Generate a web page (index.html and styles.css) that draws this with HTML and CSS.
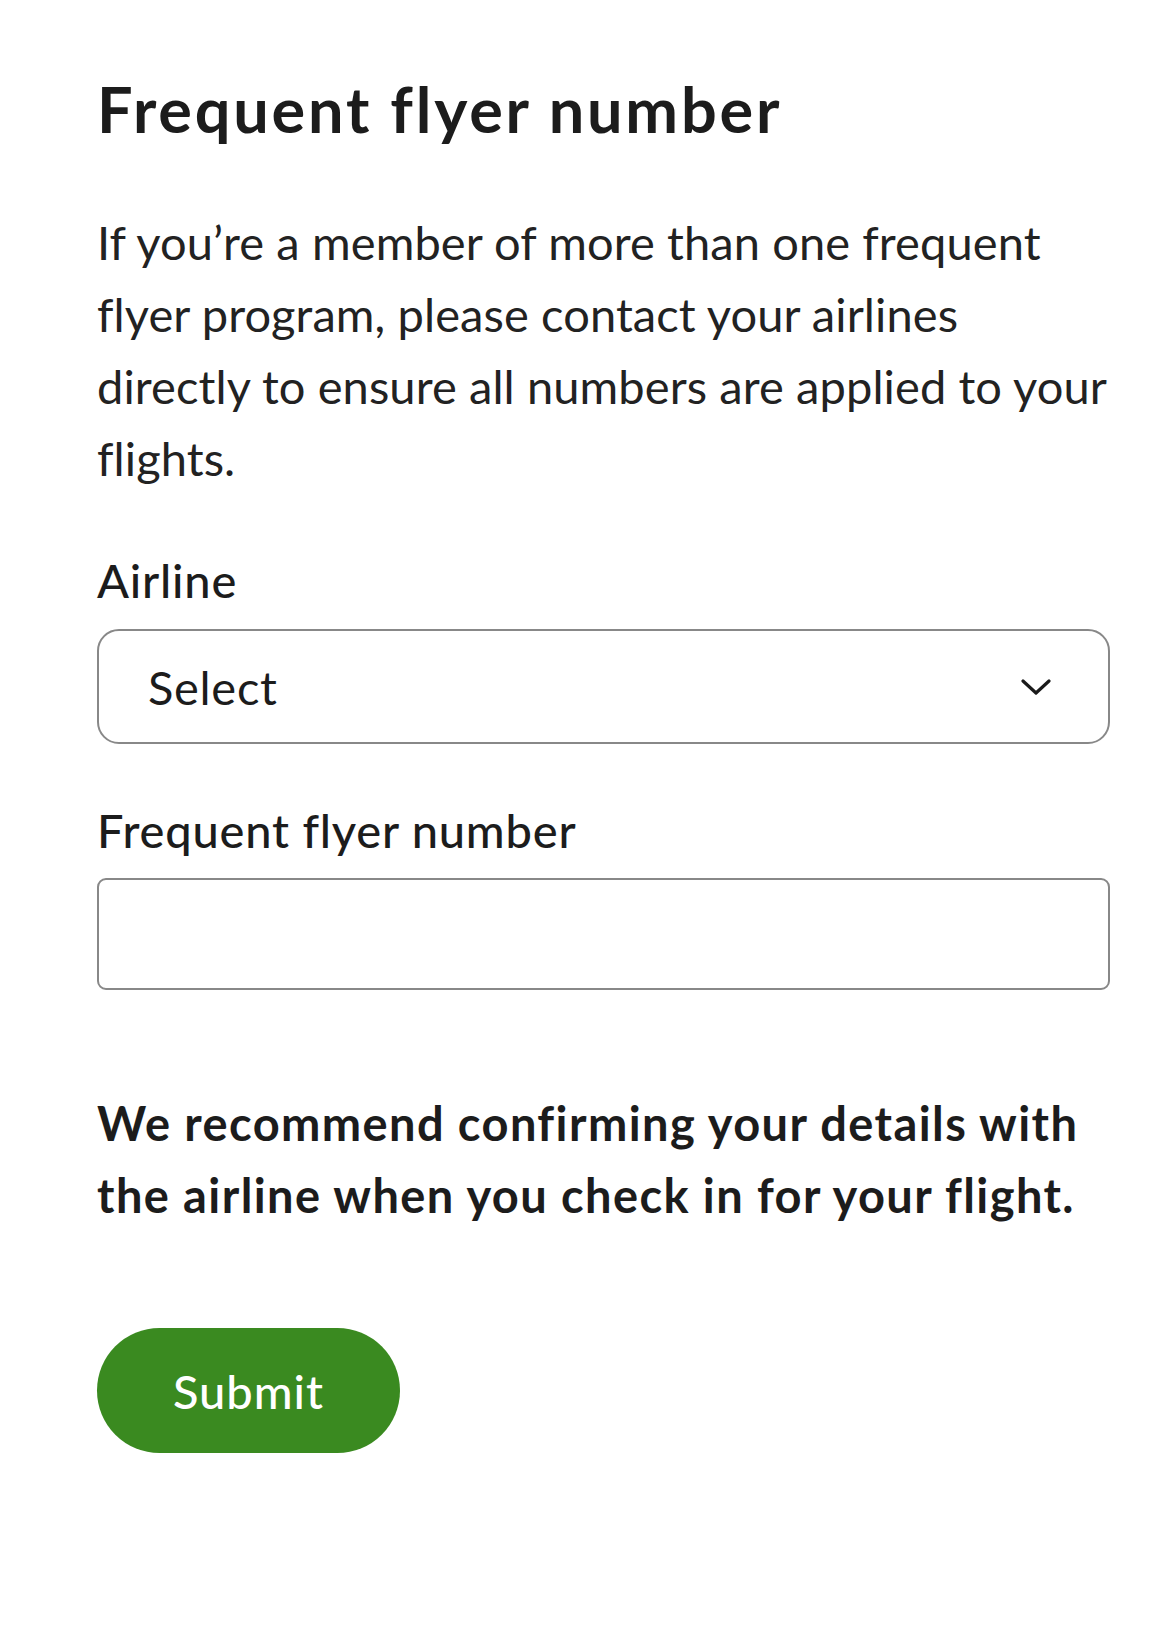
FILE: index.html
```html
<!DOCTYPE html>
<html lang="en">
<head>
<meta charset="utf-8">
<title>Frequent flyer number</title>
<link rel="stylesheet" href="styles.css">
</head>
<body>
<main class="sheet">
  <h1 class="title">Frequent flyer number</h1>
  <p class="intro">If you’re a member of more than one frequent<br>flyer program, please contact your airlines<br>directly to ensure all numbers are applied to your<br>flights.</p>
  <form class="form">
    <label class="label" for="airline">Airline</label>
    <div class="select" id="airline">
      <span class="select-value">Select</span>
      <svg class="chevron" width="30" height="18" viewBox="0 0 30 18" aria-hidden="true">
        <path d="M2 3 L15 15 L28 3" fill="none" stroke="#1a1a1a" stroke-width="3.2" stroke-linecap="round" stroke-linejoin="round"/>
      </svg>
    </div>
    <label class="label label-second" for="ffn">Frequent flyer number</label>
    <input class="input" id="ffn" type="text">
    <p class="note">We recommend confirming your details with<br>the airline when you check in for your flight.</p>
    <button class="submit" type="button">Submit</button>
  </form>
</main>
</body>
</html>
```
FILE: styles.css
```css
html, body {
  margin: 0;
  padding: 0;
  background: #ffffff;
}
body {
  font-family: Lato, "Noto Sans", sans-serif;
  color: #1c1c1c;
}
.sheet {
  padding: 73px 63px 0 97px;
  min-height: 1634px;
  box-sizing: border-box;
}
.title {
  margin: 0;
  font-size: 63px;
  line-height: 72px;
  font-weight: 700;
  letter-spacing: 2.8px;
}
.intro {
  margin: 61px 0 0;
  font-size: 47px;
  line-height: 72px;
  font-weight: 400;
  color: #222;
  white-space: nowrap;
  letter-spacing: 0.1px;
}
.form {
  display: flex;
  flex-direction: column;
  align-items: stretch;
  margin-top: 50px;
}
.label {
  display: block;
  font-size: 47px;
  line-height: 72px;
  font-weight: 500;
  letter-spacing: 0.8px;
}
.label-second {
  margin-top: 50px;
}
.select {
  margin-top: 13px;
  height: 115px;
  box-sizing: border-box;
  border: 2.5px solid #888888;
  border-radius: 22px;
  display: flex;
  align-items: center;
  justify-content: space-between;
  padding: 0 57px 0 49px;
}
.select-value {
  font-size: 47px;
  line-height: 72px;
  letter-spacing: 0.7px;
  color: #1c1c1c;
}
.chevron {
  display: block;
}
.input {
  margin-top: 12px;
  height: 112px;
  box-sizing: border-box;
  border: 2.5px solid #888888;
  border-radius: 9px;
  background: #fff;
  font: inherit;
  font-size: 47px;
  padding: 0 49px;
}
.note {
  margin: 97px 0 0;
  font-size: 47px;
  line-height: 72px;
  font-weight: 700;
  letter-spacing: 1.4px;
  white-space: nowrap;
}
.submit {
  align-self: flex-start;
  margin-top: 97px;
  height: 125px;
  width: 303px;
  border: none;
  border-radius: 63px;
  background: #3a8a20;
  color: #fff;
  font-family: inherit;
  font-size: 47px;
  font-weight: 500;
  letter-spacing: 1px;
  padding: 0;
}
```
